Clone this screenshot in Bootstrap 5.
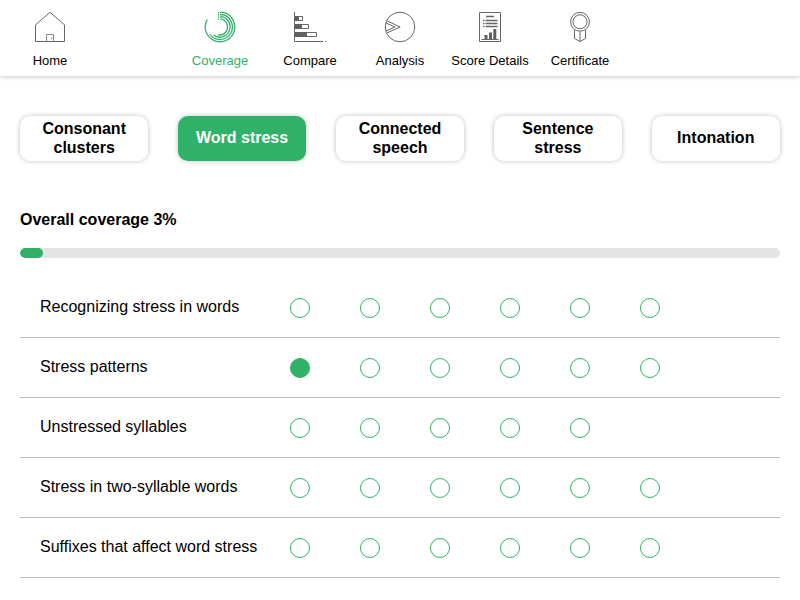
<!DOCTYPE html>
<html lang="en">
<head>
<meta charset="utf-8">
<meta name="viewport" content="width=device-width, initial-scale=1">
<title>Coverage</title>
<link href="https://cdn.jsdelivr.net/npm/bootstrap@5.3.0/dist/css/bootstrap.min.css" rel="stylesheet">
<style>
  body { font-family: "Liberation Sans", Arial, sans-serif; font-size: 16px; color: #000; background: #fff; }
  .topbar { height: 76px; padding: 11px 5px 0; box-shadow: 0 0 5px rgba(0,0,0,.3); }
  .topbar .nav-link { width: 90px; padding: 0; color: #000; font-size: 13px; line-height: 15px; white-space: nowrap; }
  .topbar .nav-link.active { color: #2fb268; }
  .topbar .home-item { margin-right: 80px; }
  .topbar svg { width: 32px; height: 32px; margin-bottom: 10px; fill: none; stroke: #666; }
  .topbar .active svg { stroke: #2fb268; }
  .topbar .solid { fill: #606060; stroke: none; }
  .page-body { padding: 40px 20px 0; }
  .topic-btn { width: 128.4px; height: 45px; padding: 0 0 2px; border: 0; border-radius: 10px; font-weight: 700; line-height: 19px; color: #000; background: #fff; box-shadow: 0 0 5px rgba(0,0,0,.25); }
  .topic-btn.active, .topic-btn:hover { color: #fff; background: #2fb268; }
  .overall { margin: 49px 0 19px; font-size: 16px; line-height: 19px; font-weight: 700; }
  .coverage-bar { height: 10px; border-radius: 5px; background: #e4e4e4; }
  .coverage-bar .progress-bar { border-radius: 5px; background: #2fb268; }
  .unit { height: 60px; padding: 0 0 0 20px; border-bottom: 1px solid #bbb; }
  .unit-name { width: 250px; line-height: 19px; padding-bottom: 2px; }
  .units { padding-top: 20px; }
  .dots { gap: 50px; padding-top: 1px; }
  .dot { width: 20px; height: 20px; border: 1px solid #2fb268; }
  .dot.done { background: #2fb268; }
</style>
<script src="https://cdn.jsdelivr.net/npm/bootstrap@5.3.0/dist/js/bootstrap.bundle.min.js"></script>
</head>
<body>
<nav class="topbar nav flex-nowrap align-items-start text-center">
  <a class="nav-link home-item d-flex flex-column align-items-center" href="#">
    <svg viewBox="0 0 32 32"><path d="M1.5 30.5V13.8L16 1.4l14.5 12.4v16.7z"/><path d="M12.5 30.5v-7h7v7M17.5 26.5v1.5" stroke="#888"/></svg>
    Home</a>
  <a class="nav-link active d-flex flex-column align-items-center" href="#">
    <svg viewBox="0 0 32 32" stroke-width="1.3"><path d="M17 1.2A14.8 14.8 0 1 1 3.2 8.6"/><path d="M17 3.5A12.5 12.5 0 1 1 5.6 23"/><path d="M17 5.7A10.3 10.3 0 1 1 9.5 24.1"/><path d="M17 7.9A8.1 8.1 0 1 1 14 23.9"/><path d="M14.5 1v8.5M16.5 1v7.5" stroke-dasharray="1.4 .8" stroke-width="1"/></svg>
    Coverage</a>
  <a class="nav-link d-flex flex-column align-items-center" href="#">
    <svg viewBox="0 0 32 32" overflow="visible"><path d="M.5 1v29.5H29M31 30.5h1"/><path class="solid" d="M1 5h4v5H1zM1 13h7v5H1zM1 21h12v5H1z"/><path d="M4.5 5.5h4v4h-4zM7.5 13.5h7v4h-7zM12.5 21.5h10v4h-10z"/></svg>
    Compare</a>
  <a class="nav-link d-flex flex-column align-items-center" href="#">
    <svg viewBox="0 0 32 32"><circle cx="16" cy="16" r="14.8"/><path d="M2.8 9.8 16.2 16 2.8 22M2 12l9 4-9.2 4" /></svg>
    Analysis</a>
  <a class="nav-link d-flex flex-column align-items-center" href="#">
    <svg viewBox="0 0 32 32"><path d="M5.5 1.5h21v29h-21z"/><path d="M12 5.5h8M11.5 9.5h12M11.5 12.5h12M11.5 15.5h12M9 9.5h1.5M9 12.5h1.5M9 15.5h1.5" stroke-width="1.3"/><path d="M7.5 28.5h17"/><path class="solid" d="M10.5 24h3v4h-3zM15 21.5h3V28h-3zM19.3 18h3v10h-3z"/></svg>
    Score Details</a>
  <a class="nav-link d-flex flex-column align-items-center" href="#">
    <svg viewBox="0 0 32 32"><circle cx="16" cy="10.8" r="9.4"/><circle cx="16" cy="10.8" r="7"/><path d="M10.5 19v8.5l5.5 3 5.5-3V19M16 20.5v10"/></svg>
    Certificate</a>
</nav>
<main class="page-body">
  <div class="d-flex justify-content-between">
    <button class="btn topic-btn">Consonant<br>clusters</button>
    <button class="btn topic-btn active">Word stress</button>
    <button class="btn topic-btn">Connected<br>speech</button>
    <button class="btn topic-btn">Sentence<br>stress</button>
    <button class="btn topic-btn">Intonation</button>
  </div>
  <h1 class="overall">Overall coverage 3%</h1>
  <div class="progress coverage-bar"><div class="progress-bar" style="width:3%"></div></div>
  <div class="units">
    <div class="unit d-flex align-items-center"><div class="unit-name">Recognizing stress in words</div><div class="dots d-flex"><span class="dot rounded-circle"></span><span class="dot rounded-circle"></span><span class="dot rounded-circle"></span><span class="dot rounded-circle"></span><span class="dot rounded-circle"></span><span class="dot rounded-circle"></span></div></div>
    <div class="unit d-flex align-items-center"><div class="unit-name">Stress patterns</div><div class="dots d-flex"><span class="dot done rounded-circle"></span><span class="dot rounded-circle"></span><span class="dot rounded-circle"></span><span class="dot rounded-circle"></span><span class="dot rounded-circle"></span><span class="dot rounded-circle"></span></div></div>
    <div class="unit d-flex align-items-center"><div class="unit-name">Unstressed syllables</div><div class="dots d-flex"><span class="dot rounded-circle"></span><span class="dot rounded-circle"></span><span class="dot rounded-circle"></span><span class="dot rounded-circle"></span><span class="dot rounded-circle"></span></div></div>
    <div class="unit d-flex align-items-center"><div class="unit-name">Stress in two-syllable words</div><div class="dots d-flex"><span class="dot rounded-circle"></span><span class="dot rounded-circle"></span><span class="dot rounded-circle"></span><span class="dot rounded-circle"></span><span class="dot rounded-circle"></span><span class="dot rounded-circle"></span></div></div>
    <div class="unit d-flex align-items-center"><div class="unit-name">Suffixes that affect word stress</div><div class="dots d-flex"><span class="dot rounded-circle"></span><span class="dot rounded-circle"></span><span class="dot rounded-circle"></span><span class="dot rounded-circle"></span><span class="dot rounded-circle"></span><span class="dot rounded-circle"></span></div></div>
  </div>
</main>
</body>
</html>
